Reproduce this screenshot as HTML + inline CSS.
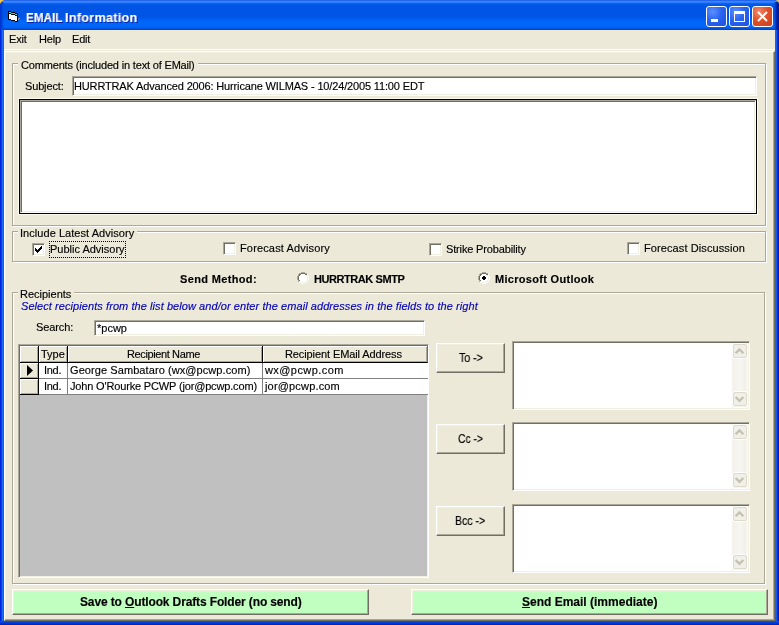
<!DOCTYPE html>
<html><head><meta charset="utf-8">
<style>
*{box-sizing:border-box;margin:0;padding:0}
html,body{width:779px;height:625px;overflow:hidden;background:#EBC35A}
body{position:relative;font-family:"Liberation Sans",sans-serif;font-size:11px;color:#000}
.a{position:absolute}
.t{position:absolute;white-space:pre;line-height:13px;will-change:transform;-webkit-text-stroke:0.15px currentColor}
.b{font-weight:bold}
#win{left:0;top:0;width:779px;height:625px;border-radius:6px 5px 0 0;overflow:hidden;background:#0055E5}
#title{left:0;top:0;width:779px;height:30px;background:linear-gradient(to bottom,#0A3ED8 0px,#3B8CFF 1px,#2D7BFF 2.5px,#0A63F0 3.5px,#0055E5 5px,#0055E5 16px,#0058EA 18px,#0066FA 21px,#0066FA 27px,#0052E0 28.5px,#0040C8 30px)}
#lb{left:0;top:30px;width:4px;height:595px;background:linear-gradient(to right,#0018D0,#0030E0 1px,#1A6CF8 2.5px,#0A5AE8 4px)}
#rb{left:775px;top:30px;width:4px;height:595px;background:linear-gradient(to right,#0A5AE8,#1A6CF8 1px,#0030E0 2.5px,#0018A0 4px)}
#bb{left:0;top:621px;width:779px;height:4px;background:linear-gradient(to bottom,#0A5AE8,#0040D8 1.5px,#0020B0 4px)}
#client{left:4px;top:30px;width:771px;height:591px;background:#ECE9D8}
.e{position:absolute}
.grp{position:absolute;border-top:1px solid #ACA899;border-left:1px solid #ACA899;border-right:1px solid #fff;border-bottom:1px solid #fff;box-shadow:inset 1px 1px 0 #fff, inset -1px -1px 0 #ACA899}
.gt{position:absolute;background:linear-gradient(to bottom,transparent 3px,#ECE9D8 3px,#ECE9D8 7px,transparent 7px);padding:0 3px;white-space:pre;line-height:13px;will-change:transform;-webkit-text-stroke:0.15px currentColor}
.tb{position:absolute;background:#fff;border-top:1px solid #ACA899;border-left:1px solid #ACA899;border-right:1px solid #fff;border-bottom:1px solid #fff;box-shadow:inset 1px 1px 0 #716F64, inset -1px -1px 0 #F1EFE2}
.btn{position:absolute;background:#ECE9D8;border-top:1px solid #fff;border-left:1px solid #fff;border-right:1px solid #716F64;border-bottom:1px solid #716F64;box-shadow:inset -1px -1px 0 #ACA899, inset 1px 1px 0 #F1EFE2}
.cb{position:absolute;width:13px;height:13px;background:#fff;border-top:1px solid #ACA899;border-left:1px solid #ACA899;border-right:1px solid #fff;border-bottom:1px solid #fff;box-shadow:inset 1px 1px 0 #716F64, inset -1px -1px 0 #F1EFE2}
.hc{position:absolute;top:346px;height:17px;background:#ECE9D8;border-right:1px solid #000;border-bottom:1px solid #000;box-shadow:inset 1px 1px 0 #fff, inset -1px -1px 0 #ACA899}
.cell{position:absolute;background:#fff;border-right:1px solid #808080;border-bottom:1px solid #808080}
</style></head><body>
<div id="win" class="a">
  <div id="title" class="a"></div>
  <div class="a" style="left:0;top:2px;width:4px;height:28px;background:linear-gradient(to right,#0028C8,#0040D8 1px,#0050E4 3px,rgba(0,85,229,0) 4px)"></div><div class="a" style="left:774px;top:2px;width:5px;height:28px;background:linear-gradient(to right,rgba(0,85,229,0),#0048D8 1px,#0030B8 2px,#0020A0 3px,#001890 5px)"></div>
  <div id="lb" class="a"></div>
  <div id="rb" class="a"></div>
  <div id="bb" class="a"></div>
  <div id="client" class="a"></div>
</div>
<!-- title icon -->
<svg class="a" style="left:0;top:0" width="24" height="24" shape-rendering="crispEdges">
 <g fill="#000"><rect x="8" y="11" width="3" height="1"/><rect x="8" y="12" width="1" height="8"/><rect x="8" y="19" width="3" height="1"/><rect x="11" y="12" width="4" height="1"/><rect x="9" y="13" width="2" height="1"/><rect x="15" y="13" width="3" height="1"/><rect x="11" y="14" width="4" height="1"/><rect x="17" y="14" width="1" height="8"/><rect x="15" y="15" width="2" height="1"/><rect x="11" y="20" width="4" height="1"/><rect x="15" y="21" width="3" height="1"/></g>
 <g fill="#22E6E6"><rect x="9" y="12" width="2" height="1"/><rect x="11" y="13" width="4" height="1"/><rect x="15" y="14" width="2" height="1"/></g>
 <g fill="#fff"><rect x="9" y="14" width="2" height="5"/><rect x="11" y="15" width="4" height="5"/><rect x="15" y="16" width="2" height="5"/></g>
 <g fill="#A89070"><rect x="18" y="18" width="2" height="1"/><rect x="18" y="19" width="1" height="1"/></g>
</svg>
<div class="t b" style="left:26px;top:10px;font-size:13px;line-height:16px;color:#fff;transform:scaleX(0.9);transform-origin:0 0;text-shadow:1px 1px 0 #0A1E9C">EMAIL</div><div class="t b" style="left:65px;top:10px;font-size:13px;line-height:16px;color:#fff;letter-spacing:0.3px;transform:scaleX(0.97);transform-origin:0 0;text-shadow:1px 1px 0 #0A1E9C">Information</div>
<!-- caption buttons -->
<div class="a" style="left:706px;top:6px;width:21px;height:21px;border:1px solid #fff;border-radius:3px;background:radial-gradient(circle at 30% 25%,#5B8FFF 0,#2A64F0 45%,#1C4FE0 100%)"></div>
<div class="a" style="left:711px;top:19px;width:7px;height:3px;background:#fff"></div>
<div class="a" style="left:729px;top:6px;width:21px;height:21px;border:1px solid #fff;border-radius:3px;background:radial-gradient(circle at 30% 25%,#5B8FFF 0,#2A64F0 45%,#1C4FE0 100%)"></div>
<div class="a" style="left:734px;top:11px;width:11px;height:11px;border:1px solid #fff;border-top:3px solid #fff"></div>
<div class="a" style="left:752px;top:6px;width:21px;height:21px;border:1px solid #fff;border-radius:3px;background:radial-gradient(circle at 30% 25%,#F08A70 0,#E0502A 45%,#C8401A 100%)"></div>
<svg class="a" style="left:752px;top:6px" width="21" height="21" viewBox="0 0 21 21"><path d="M6 6L15 15M15 6L6 15" stroke="#fff" stroke-width="2"/></svg>

<!-- menu -->
<div class="t" style="left:9px;top:33px;letter-spacing:-0.2px">Exit</div>
<div class="t" style="left:39px;top:33px;letter-spacing:-0.2px">Help</div>
<div class="t" style="left:72px;top:33px;letter-spacing:-0.2px">Edit</div>
<div class="e" style="left:4px;top:49px;width:771px;height:1px;background:#fff"></div>
<!-- form frame -->
<div class="e" style="left:4px;top:51px;width:771px;height:570px;border-top:1px solid #fff;border-left:1px solid #fff;border-right:1px solid #716F64;border-bottom:1px solid #716F64;box-shadow:inset -1px -1px 0 #ACA899, inset 1px 1px 0 #F1EFE2"></div>

<!-- Comments group -->
<div class="e" style="left:13px;top:64px;width:754px;height:163px;border:1px solid #fff"></div><div class="e" style="left:12px;top:63px;width:754px;height:163px;border:1px solid #ACA899"></div>
<div class="gt" style="left:18px;top:59px;letter-spacing:-0.17px">Comments (included in text of EMail)</div>
<div class="t" style="left:25px;top:80px;letter-spacing:-0.15px">Subject:</div>
<div class="tb" style="left:72px;top:76px;width:685px;height:20px"></div>
<div class="t" style="left:74px;top:80px;letter-spacing:-0.15px">HURRTRAK Advanced 2006: Hurricane WILMAS - 10/24/2005 11:00 EDT</div>
<div class="e" style="left:18px;top:98px;width:740px;height:117px;border:1px solid #FFFBEE"><div style="width:100%;height:100%;border:1px solid #000"><div style="width:100%;height:100%;background:#fff;border-top:1px solid #ACA899;border-left:1px solid #ACA899;border-right:1px solid #fff;border-bottom:1px solid #fff;box-shadow:inset 1px 1px 0 #716F64, inset -1px -1px 0 #F1EFE2"></div></div></div>

<!-- Advisory group -->
<div class="e" style="left:13px;top:232px;width:754px;height:31px;border:1px solid #fff"></div><div class="e" style="left:12px;top:231px;width:754px;height:31px;border:1px solid #ACA899"></div>
<div class="gt" style="left:18px;top:227px;padding-left:2px;letter-spacing:0.05px">Include Latest Advisory</div>

<div class="cb" style="left:32px;top:243px"></div>
<svg class="a" style="left:32px;top:243px" width="13" height="13" viewBox="0 0 13 13" shape-rendering="crispEdges"><g fill="#000"><rect x="9" y="3" width="1" height="3"/><rect x="8" y="4" width="1" height="3"/><rect x="7" y="5" width="1" height="3"/><rect x="6" y="6" width="1" height="3"/><rect x="5" y="7" width="1" height="3"/><rect x="4" y="6" width="1" height="3"/><rect x="3" y="5" width="1" height="3"/></g></svg>
<div class="e" style="left:49px;top:241px;width:77px;height:17px;border:1px dotted #000"></div>
<div class="t" style="left:50px;top:243px">Public Advisory</div>
<div class="cb" style="left:223px;top:242px"></div>
<div class="t" style="left:240px;top:242px;letter-spacing:0.15px">Forecast Advisory</div>
<div class="cb" style="left:429px;top:243px"></div>
<div class="t" style="left:446px;top:243px;letter-spacing:-0.15px">Strike Probability</div>
<div class="cb" style="left:627px;top:242px"></div>
<div class="t" style="left:644px;top:242px;letter-spacing:0.1px">Forecast Discussion</div>

<!-- send method -->
<div class="t b" style="left:180px;top:273px;letter-spacing:0.35px">Send Method:</div>
<svg class="a" style="left:297px;top:272px" width="12" height="12" shape-rendering="crispEdges"><g fill="#fff"><rect x="3" y="2" width="6" height="8"/><rect x="2" y="3" width="8" height="6"/></g><g fill="#ACA899"><rect x="4" y="0" width="4" height="1"/><rect x="2" y="1" width="2" height="1"/><rect x="8" y="1" width="2" height="1"/><rect x="1" y="2" width="1" height="2"/><rect x="0" y="4" width="1" height="4"/><rect x="1" y="8" width="1" height="2"/></g><g fill="#fff"><rect x="10" y="2" width="1" height="2"/><rect x="11" y="4" width="1" height="4"/><rect x="10" y="8" width="1" height="2"/><rect x="2" y="10" width="2" height="1"/><rect x="8" y="10" width="2" height="1"/><rect x="4" y="11" width="4" height="1"/></g><g fill="#716F64"><rect x="4" y="1" width="4" height="1"/><rect x="2" y="2" width="2" height="1"/><rect x="8" y="2" width="2" height="1"/><rect x="2" y="3" width="1" height="1"/><rect x="1" y="4" width="1" height="4"/><rect x="2" y="8" width="1" height="1"/></g><g fill="#F1EFE2"><rect x="9" y="3" width="1" height="1"/><rect x="10" y="4" width="1" height="4"/><rect x="9" y="8" width="1" height="1"/><rect x="8" y="9" width="2" height="1"/><rect x="4" y="10" width="4" height="1"/></g></svg>
<div class="t b" style="left:314px;top:273px;letter-spacing:-0.43px">HURRTRAK SMTP</div>
<svg class="a" style="left:478px;top:272px" width="12" height="12" shape-rendering="crispEdges"><g fill="#fff"><rect x="3" y="2" width="6" height="8"/><rect x="2" y="3" width="8" height="6"/></g><g fill="#ACA899"><rect x="4" y="0" width="4" height="1"/><rect x="2" y="1" width="2" height="1"/><rect x="8" y="1" width="2" height="1"/><rect x="1" y="2" width="1" height="2"/><rect x="0" y="4" width="1" height="4"/><rect x="1" y="8" width="1" height="2"/></g><g fill="#fff"><rect x="10" y="2" width="1" height="2"/><rect x="11" y="4" width="1" height="4"/><rect x="10" y="8" width="1" height="2"/><rect x="2" y="10" width="2" height="1"/><rect x="8" y="10" width="2" height="1"/><rect x="4" y="11" width="4" height="1"/></g><g fill="#716F64"><rect x="4" y="1" width="4" height="1"/><rect x="2" y="2" width="2" height="1"/><rect x="8" y="2" width="2" height="1"/><rect x="2" y="3" width="1" height="1"/><rect x="1" y="4" width="1" height="4"/><rect x="2" y="8" width="1" height="1"/></g><g fill="#F1EFE2"><rect x="9" y="3" width="1" height="1"/><rect x="10" y="4" width="1" height="4"/><rect x="9" y="8" width="1" height="1"/><rect x="8" y="9" width="2" height="1"/><rect x="4" y="10" width="4" height="1"/></g><g fill="#000"><rect x="5" y="4" width="2" height="1"/><rect x="4" y="5" width="4" height="2"/><rect x="5" y="7" width="2" height="1"/></g></svg>
<div class="t b" style="left:495px;top:273px;letter-spacing:0.3px">Microsoft Outlook</div>

<!-- Recipients group -->
<div class="e" style="left:13px;top:293px;width:753px;height:292px;border:1px solid #fff"></div><div class="e" style="left:12px;top:292px;width:753px;height:292px;border:1px solid #ACA899"></div>
<div class="gt" style="left:18px;top:288px;padding-left:2px">Recipients</div>
<div class="t" style="left:21px;top:300px;font-style:italic;color:#0000B4;letter-spacing:0.07px">Select recipients from the list below and/or enter the email addresses in the fields to the right</div>
<div class="t" style="left:36px;top:321px;letter-spacing:-0.1px">Search:</div>
<div class="tb" style="left:94px;top:320px;width:331px;height:16px"></div>
<div class="t" style="left:97px;top:322px">*pcwp</div>

<!-- grid -->
<div class="e" style="left:18px;top:344px;width:411px;height:234px;background:#C0C0C0;border-top:1px solid #ACA899;border-left:1px solid #ACA899;border-right:1px solid #fff;border-bottom:1px solid #fff;box-shadow:inset 1px 1px 0 #716F64, inset -1px -1px 0 #F1EFE2"></div>
<div class="hc" style="left:20px;width:19px"></div>
<div class="hc" style="left:39px;width:29px"></div>
<div class="hc" style="left:68px;width:195px"></div>
<div class="hc" style="left:263px;width:165px;border-right-color:#716F64"></div>
<div class="t" style="left:41px;top:348px">Type</div>
<div class="t" style="left:127px;top:348px;letter-spacing:-0.38px">Recipient Name</div>
<div class="t" style="left:285px;top:348px;letter-spacing:-0.1px">Recipient EMail Address</div>
<div class="hc" style="left:20px;top:363px;height:16px;width:19px"></div>
<div class="hc" style="left:20px;top:379px;height:16px;width:19px"></div>
<svg class="a" style="left:27px;top:365px" width="7" height="11" viewBox="0 0 7 11"><path d="M0 0L6 5.5L0 11z" fill="#000"/></svg>
<div class="cell" style="left:39px;top:363px;width:29px;height:16px"></div>
<div class="cell" style="left:68px;top:363px;width:195px;height:16px"></div>
<div class="cell" style="left:263px;top:363px;width:165px;height:16px;border-right:0"></div>
<div class="cell" style="left:39px;top:379px;width:29px;height:16px"></div>
<div class="cell" style="left:68px;top:379px;width:195px;height:16px"></div>
<div class="cell" style="left:263px;top:379px;width:165px;height:16px;border-right:0"></div>
<div class="t" style="left:44px;top:364px;letter-spacing:-0.3px">Ind.</div>
<div class="t" style="left:70px;top:364px;letter-spacing:0.08px">George Sambataro (wx@pcwp.com)</div>
<div class="t" style="left:265px;top:364px;letter-spacing:0.42px">wx@pcwp.com</div>
<div class="t" style="left:44px;top:380px;letter-spacing:-0.3px">Ind.</div>
<div class="t" style="left:70px;top:380px;letter-spacing:-0.16px">John O'Rourke PCWP (jor@pcwp.com)</div>
<div class="t" style="left:265px;top:380px;letter-spacing:0.17px">jor@pcwp.com</div>

<!-- To / Cc / Bcc -->
<div class="btn" style="left:436px;top:343px;width:69px;height:30px"></div>
<div class="t" style="left:459px;top:352px;font-size:12px;transform:scaleX(0.88);transform-origin:0 0">To -&gt;</div>
<div class="btn" style="left:436px;top:424px;width:69px;height:30px"></div>
<div class="t" style="left:458px;top:433px;font-size:12px;transform:scaleX(0.86);transform-origin:0 0">Cc -&gt;</div>
<div class="btn" style="left:436px;top:506px;width:69px;height:30px"></div>
<div class="t" style="left:455px;top:515px;font-size:12px;transform:scaleX(0.88);transform-origin:0 0">Bcc -&gt;</div>
<div class="tb" style="left:512px;top:341px;width:238px;height:69px"></div>
<div class="tb" style="left:512px;top:422px;width:238px;height:69px"></div>
<div class="tb" style="left:512px;top:504px;width:238px;height:69px"></div>
<svg class="a" style="left:731px;top:343px" width="17" height="65" viewBox="0 0 17 65">
 <defs><linearGradient id="tr343" x1="0" x2="1" y1="0" y2="0"><stop offset="0" stop-color="#FFFFFF"/><stop offset="0.12" stop-color="#F3F1EA"/><stop offset="0.5" stop-color="#F7F6F1"/><stop offset="0.88" stop-color="#F1EFE7"/><stop offset="1" stop-color="#FFFFFF"/></linearGradient></defs>
 <rect x="0" y="0" width="17" height="65" fill="url(#tr343)"/>
 <rect x="1.5" y="0.5" width="15" height="15" rx="2.5" fill="none" stroke="#fff"/>
 <rect x="2.5" y="1.5" width="13" height="13" rx="1.5" fill="#F1F0E8" stroke="#DDDACB"/>
 <path d="M4.6 10.3L8.5 6.4L12.4 10.3" fill="none" stroke="#C4C1B3" stroke-width="2.3"/>
 <rect x="1.5" y="48.5" width="15" height="16" rx="2.5" fill="none" stroke="#fff"/>
 <rect x="2.5" y="49.5" width="13" height="13" rx="1.5" fill="#F1F0E8" stroke="#DDDACB"/>
 <path d="M4.6 54L8.5 57.9L12.4 54" fill="none" stroke="#C4C1B3" stroke-width="2.3"/>
</svg>
<svg class="a" style="left:731px;top:424px" width="17" height="65" viewBox="0 0 17 65">
 <defs><linearGradient id="tr424" x1="0" x2="1" y1="0" y2="0"><stop offset="0" stop-color="#FFFFFF"/><stop offset="0.12" stop-color="#F3F1EA"/><stop offset="0.5" stop-color="#F7F6F1"/><stop offset="0.88" stop-color="#F1EFE7"/><stop offset="1" stop-color="#FFFFFF"/></linearGradient></defs>
 <rect x="0" y="0" width="17" height="65" fill="url(#tr424)"/>
 <rect x="1.5" y="0.5" width="15" height="15" rx="2.5" fill="none" stroke="#fff"/>
 <rect x="2.5" y="1.5" width="13" height="13" rx="1.5" fill="#F1F0E8" stroke="#DDDACB"/>
 <path d="M4.6 10.3L8.5 6.4L12.4 10.3" fill="none" stroke="#C4C1B3" stroke-width="2.3"/>
 <rect x="1.5" y="48.5" width="15" height="16" rx="2.5" fill="none" stroke="#fff"/>
 <rect x="2.5" y="49.5" width="13" height="13" rx="1.5" fill="#F1F0E8" stroke="#DDDACB"/>
 <path d="M4.6 54L8.5 57.9L12.4 54" fill="none" stroke="#C4C1B3" stroke-width="2.3"/>
</svg>
<svg class="a" style="left:731px;top:506px" width="17" height="65" viewBox="0 0 17 65">
 <defs><linearGradient id="tr506" x1="0" x2="1" y1="0" y2="0"><stop offset="0" stop-color="#FFFFFF"/><stop offset="0.12" stop-color="#F3F1EA"/><stop offset="0.5" stop-color="#F7F6F1"/><stop offset="0.88" stop-color="#F1EFE7"/><stop offset="1" stop-color="#FFFFFF"/></linearGradient></defs>
 <rect x="0" y="0" width="17" height="65" fill="url(#tr506)"/>
 <rect x="1.5" y="0.5" width="15" height="15" rx="2.5" fill="none" stroke="#fff"/>
 <rect x="2.5" y="1.5" width="13" height="13" rx="1.5" fill="#F1F0E8" stroke="#DDDACB"/>
 <path d="M4.6 10.3L8.5 6.4L12.4 10.3" fill="none" stroke="#C4C1B3" stroke-width="2.3"/>
 <rect x="1.5" y="48.5" width="15" height="16" rx="2.5" fill="none" stroke="#fff"/>
 <rect x="2.5" y="49.5" width="13" height="13" rx="1.5" fill="#F1F0E8" stroke="#DDDACB"/>
 <path d="M4.6 54L8.5 57.9L12.4 54" fill="none" stroke="#C4C1B3" stroke-width="2.3"/>
</svg>

<!-- bottom buttons -->
<div class="btn" style="left:12px;top:589px;width:357px;height:26px;background:#C0FFC0"></div>
<div class="t b" style="left:80px;top:596px;font-size:12px;letter-spacing:-0.13px">Save to <u>O</u>utlook Drafts Folder (no send)</div>
<div class="btn" style="left:411px;top:589px;width:357px;height:26px;background:#C0FFC0"></div>
<div class="t b" style="left:522px;top:596px;font-size:12px"><u>S</u>end Email (immediate)</div>
</body></html>
